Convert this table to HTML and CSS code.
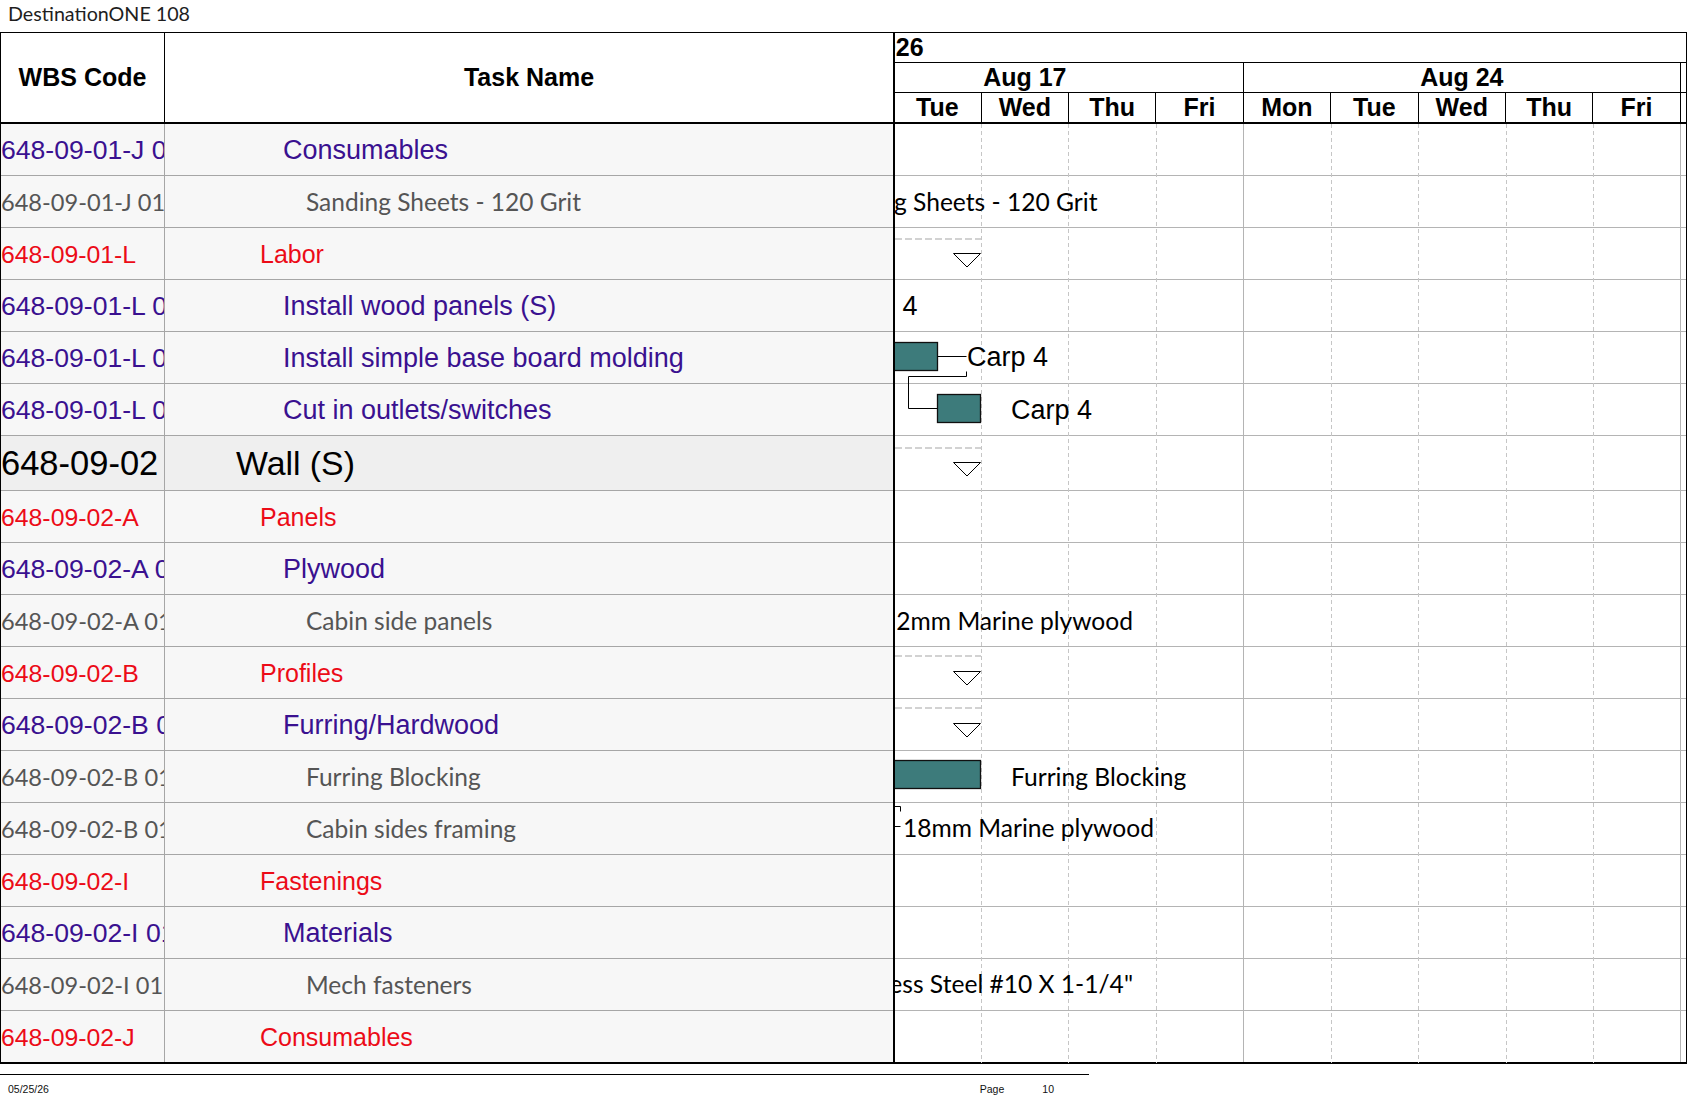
FILE: index.html
```html
<!DOCTYPE html>
<html lang="en">
<head>
<meta charset="utf-8">
<title>DestinationONE 108</title>
<link rel="stylesheet" href="styles.css">
</head>
<body>
<div class="title">DestinationONE 108</div>
<div class="sheet">
  <div class="head">
    <div class="h-wbs">WBS Code</div>
    <div class="h-task">Task Name</div>
    <div class="g-head">
      <div class="g-year"><span>2026</span></div>
      <div class="g-weeks">
        <div class="week">Aug 17</div>
        <div class="week">Aug 24</div>
        <div class="week">Aug 31</div>
      </div>
      <div class="g-days">
        <div class="day">Mon</div><div class="day">Tue</div><div class="day">Wed</div><div class="day">Thu</div><div class="day">Fri</div>
        <div class="day">Mon</div><div class="day">Tue</div><div class="day">Wed</div><div class="day">Thu</div><div class="day">Fri</div>
        <div class="day">Mon</div>
      </div>
    </div>
  </div>
  <div class="body">
    <div class="table">
      <div class="row lv-p"><div class="wbs">648-09-01-J 01</div><div class="task">Consumables</div></div>
      <div class="row lv-g"><div class="wbs">648-09-01-J 01 001</div><div class="task">Sanding Sheets - 120 Grit</div></div>
      <div class="row lv-r"><div class="wbs">648-09-01-L</div><div class="task">Labor</div></div>
      <div class="row lv-p"><div class="wbs">648-09-01-L 01</div><div class="task">Install wood panels (S)</div></div>
      <div class="row lv-p"><div class="wbs">648-09-01-L 02</div><div class="task">Install simple base board molding</div></div>
      <div class="row lv-p"><div class="wbs">648-09-01-L 03</div><div class="task">Cut in outlets/switches</div></div>
      <div class="row lv-b tall"><div class="wbs">648-09-02</div><div class="task">Wall (S)</div></div>
      <div class="row lv-r"><div class="wbs">648-09-02-A</div><div class="task">Panels</div></div>
      <div class="row lv-p"><div class="wbs">648-09-02-A 01</div><div class="task">Plywood</div></div>
      <div class="row lv-g"><div class="wbs">648-09-02-A 01 01</div><div class="task">Cabin side panels</div></div>
      <div class="row lv-r"><div class="wbs">648-09-02-B</div><div class="task">Profiles</div></div>
      <div class="row lv-p"><div class="wbs">648-09-02-B 01</div><div class="task">Furring/Hardwood</div></div>
      <div class="row lv-g"><div class="wbs">648-09-02-B 01 01</div><div class="task">Furring Blocking</div></div>
      <div class="row lv-g"><div class="wbs">648-09-02-B 01 02</div><div class="task">Cabin sides framing</div></div>
      <div class="row lv-r"><div class="wbs">648-09-02-I</div><div class="task">Fastenings</div></div>
      <div class="row lv-p"><div class="wbs">648-09-02-I 01</div><div class="task">Materials</div></div>
      <div class="row lv-g"><div class="wbs">648-09-02-I 01 01</div><div class="task">Mech fasteners</div></div>
      <div class="row lv-r"><div class="wbs">648-09-02-J</div><div class="task">Consumables</div></div>
    </div>
    <div class="gantt">
      <div class="g-row"></div><div class="g-row"></div><div class="g-row"></div>
      <div class="g-row"></div><div class="g-row"></div><div class="g-row"></div>
      <div class="g-row tall"></div>
      <div class="g-row"></div><div class="g-row"></div><div class="g-row"></div>
      <div class="g-row"></div><div class="g-row"></div><div class="g-row"></div>
      <div class="g-row"></div><div class="g-row"></div><div class="g-row"></div>
      <div class="g-row"></div><div class="g-row"></div>
      <svg class="chart" width="791" height="939" viewBox="0 0 791 939" xmlns="http://www.w3.org/2000/svg">
        <g class="grid-dash">
          <line x1="86.5" y1="0" x2="86.5" y2="939"/>
          <line x1="173.5" y1="0" x2="173.5" y2="939"/>
          <line x1="261.5" y1="0" x2="261.5" y2="939"/>
          <line x1="436.5" y1="0" x2="436.5" y2="939"/>
          <line x1="523.5" y1="0" x2="523.5" y2="939"/>
          <line x1="611.5" y1="0" x2="611.5" y2="939"/>
          <line x1="698.5" y1="0" x2="698.5" y2="939"/>
        </g>
        <g class="grid-week">
          <line x1="348.5" y1="0" x2="348.5" y2="938"/>
          <line x1="785.5" y1="0" x2="785.5" y2="938"/>
        </g>
        <g class="sum-dash">
          <line x1="0" y1="115" x2="86" y2="115"/>
          <line x1="0" y1="324" x2="86" y2="324"/>
          <line x1="0" y1="532" x2="86" y2="532"/>
          <line x1="0" y1="584" x2="86" y2="584"/>
        </g>
        <g class="sum-tri">
          <polygon points="58.5,129.5 85.5,129.5 72,143"/>
          <polygon points="58.5,338.5 85.5,338.5 72,352"/>
          <polygon points="58.5,547.5 85.5,547.5 72,561"/>
          <polygon points="58.5,599.5 85.5,599.5 72,613"/>
        </g>
        <g class="bars">
          <rect x="-10" y="218.5" width="52.5" height="28"/>
          <rect x="42.5" y="270.5" width="43" height="28"/>
          <rect x="-10" y="636.5" width="95.5" height="28"/>
        </g>
        <g class="links">
          <path d="M42.5 232.5 H71.5"/>
          <path d="M71.5 247.5 V252.5 H13.5 V284.5 H42.5"/>
          <path d="M-1 682.5 H5.5 V687.5"/>
          <path d="M-1 702.5 H5.5"/>
        </g>
        <text class="lbl-c" x="202.5" y="86.5" text-anchor="end">Sanding Sheets - 120 Grit</text>
        <text class="lbl-a" x="22.5" y="190.5" text-anchor="end">Carp 4</text>
        <text class="lbl-a" x="72" y="242">Carp 4</text>
        <text class="lbl-a" x="116" y="294.5">Carp 4</text>
        <text class="lbl-c" x="238" y="505.5" text-anchor="end">12mm Marine plywood</text>
        <text class="lbl-c" x="116" y="662">Furring Blocking</text>
        <text class="lbl-c" x="8" y="713">18mm Marine plywood</text>
        <text class="lbl-c" x="238" y="868.5" text-anchor="end">Stainless Steel #10 X 1-1/4"</text>
      </svg>
    </div>
  </div>
</div>
<div class="footer">
  <span class="f-date">05/25/26</span>
  <span class="f-page">Page</span>
  <span class="f-no">10</span>
</div>
</body>
</html>
```
FILE: styles.css
```css
html, body {
  margin: 0;
  padding: 0;
  background: #ffffff;
}

body {
  width: 1687px;
  font-family: "Liberation Sans", Arial, sans-serif;
  color: #000;
}

.title {
  height: 32px;
  box-sizing: border-box;
  padding-left: 8px;
  font-family: Lato, "Liberation Sans", sans-serif;
  font-weight: 400;
  font-size: 19.7px;
  line-height: 28px;
  color: #1e1e1e;
}

.sheet {
  width: 1687px;
  box-sizing: border-box;
  border-top: 1px solid #000;
  border-left: 1px solid #000;
  border-right: 1px solid #000;
}

/* ---------- header ---------- */
.head {
  display: flex;
  height: 91px;
  box-sizing: border-box;
  border-bottom: 2px solid #000;
  font-weight: bold;
  font-size: 25px;
}

.h-wbs {
  width: 164px;
  flex: none;
  box-sizing: border-box;
  border-right: 1px solid #000;
  display: flex;
  align-items: center;
  justify-content: center;
}

.h-task {
  width: 728px;
  flex: none;
  display: flex;
  align-items: center;
  justify-content: center;
}

.g-head {
  width: 793px;
  flex: none;
  box-sizing: border-box;
  border-left: 2px solid #000;
  overflow: hidden;
}

.g-year {
  height: 30px;
  box-sizing: border-box;
  border-bottom: 1px solid #000;
  line-height: 29px;
  white-space: nowrap;
  text-indent: -27px;
}

.g-weeks {
  display: flex;
  height: 30px;
  box-sizing: border-box;
  margin-left: -88.2px;
  border-bottom: 1px solid #000;
}

.week {
  flex: none;
  width: 437px;
  box-sizing: border-box;
  border-right: 1px solid #000;
  text-align: center;
  line-height: 29px;
  white-space: nowrap;
}

.g-days {
  display: flex;
  height: 29px;
  margin-left: -88.2px;
}

.day {
  flex: none;
  width: 87.4px;
  box-sizing: border-box;
  border-right: 1px solid #000;
  text-align: center;
  line-height: 29px;
}

/* ---------- body ---------- */
.body {
  display: flex;
  border-bottom: 1px solid #000;
}

.table {
  width: 892px;
  flex: none;
}

.row {
  display: flex;
  height: 52px;
  box-sizing: border-box;
  border-bottom: 1px solid #a6a6a6;
  background: #f7f7f7;
}

.row.tall {
  height: 55px;
  background: #efefef;
}

.row:last-child {
  border-bottom-color: #000;
}

.wbs {
  width: 164px;
  flex: none;
  box-sizing: border-box;
  border-right: 1px solid #a6a6a6;
  overflow: hidden;
  white-space: nowrap;
  display: flex;
  align-items: center;
}

.task {
  flex: 1;
  overflow: hidden;
  white-space: nowrap;
  display: flex;
  align-items: center;
}

/* level: red */
.lv-r { color: #ec0b17; }
.lv-r .wbs { font-size: 24.8px; padding-top: 2px; }
.lv-r .task { font-size: 25px; padding-left: 95px; padding-top: 2px; }

/* level: purple */
.lv-p { color: #3a1190; }
.lv-p .wbs { font-size: 26.6px; padding-top: 2px; }
.lv-p .task { font-size: 27px; padding-left: 118px; padding-top: 2px; }

/* level: grey (resources) */
.lv-g { color: #555555; font-family: Lato, "Liberation Sans", sans-serif; }
.lv-g .wbs { font-size: 23.6px; }
.lv-g .task { font-size: 24.5px; padding-left: 141px; }

/* level: black (summary) */
.lv-b { color: #000; }
.lv-b .wbs { font-size: 34.5px; }
.lv-b .task { font-size: 33.8px; padding-left: 71px; }

/* ---------- gantt ---------- */
.gantt {
  width: 793px;
  flex: none;
  box-sizing: border-box;
  border-left: 2px solid #000;
  position: relative;
  overflow: hidden;
  background: #fff;
}

.g-row {
  height: 52px;
  box-sizing: border-box;
  border-bottom: 1px solid #b4b4b4;
}

.g-row.tall {
  height: 55px;
}

.g-row:nth-child(18) {
  border-bottom-color: #000;
}

.chart {
  position: absolute;
  left: 0;
  top: 0;
  width: 791px;
  height: 939px;
}

.grid-dash line {
  stroke: #c6c6c6;
  stroke-width: 1;
  stroke-dasharray: 4 3;
  shape-rendering: crispEdges;
}

.grid-week line {
  stroke: #b4b4b4;
  stroke-width: 1;
  shape-rendering: crispEdges;
}

.sum-dash line {
  stroke: #d2d2d2;
  stroke-width: 2;
  stroke-dasharray: 7 3;
}

.sum-tri polygon {
  fill: #fff;
  stroke: #000;
  stroke-width: 1;
}

.bars rect {
  fill: #3d7b7b;
  stroke: #101010;
  stroke-width: 1.3;
}

.links path {
  fill: none;
  stroke: #000;
  stroke-width: 1;
}

.lbl-a {
  font-family: "Liberation Sans", Arial, sans-serif;
  font-size: 27px;
  fill: #000;
}

.lbl-c {
  font-family: Lato, "Liberation Sans", sans-serif;
  font-size: 24.6px;
  fill: #000;
}

/* ---------- footer ---------- */
.footer {
  width: 1089px;
  margin-top: 10px;
  height: 28px;
  box-sizing: border-box;
  border-top: 1px solid #000;
  display: flex;
  align-items: center;
  padding-left: 8px;
  padding-right: 35px;
  font-size: 10.5px;
  color: #111;
}

.f-page {
  margin-left: auto;
}

.f-no {
  margin-left: 38px;
}
```
